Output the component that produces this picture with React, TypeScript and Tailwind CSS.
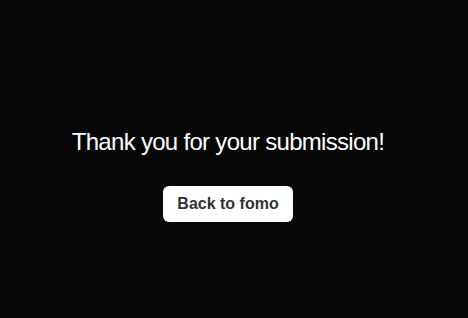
export default function App() {
  return (
    <div
      className="min-h-[318px] w-full bg-[#070707] flex flex-col items-center pr-3 pt-[128px]"
      style={{ fontFamily: '"Liberation Sans", Arial, sans-serif' }}
    >
      <h1 className="text-[24px] leading-[28px] tracking-[-0.7px] text-white font-normal">
        Thank you for your submission!
      </h1>
      <button className="mt-[30px] h-[36px] px-[14px] rounded-md bg-white text-[16px] font-bold text-[#333333]">
        Back to fomo
      </button>
    </div>
  );
}
